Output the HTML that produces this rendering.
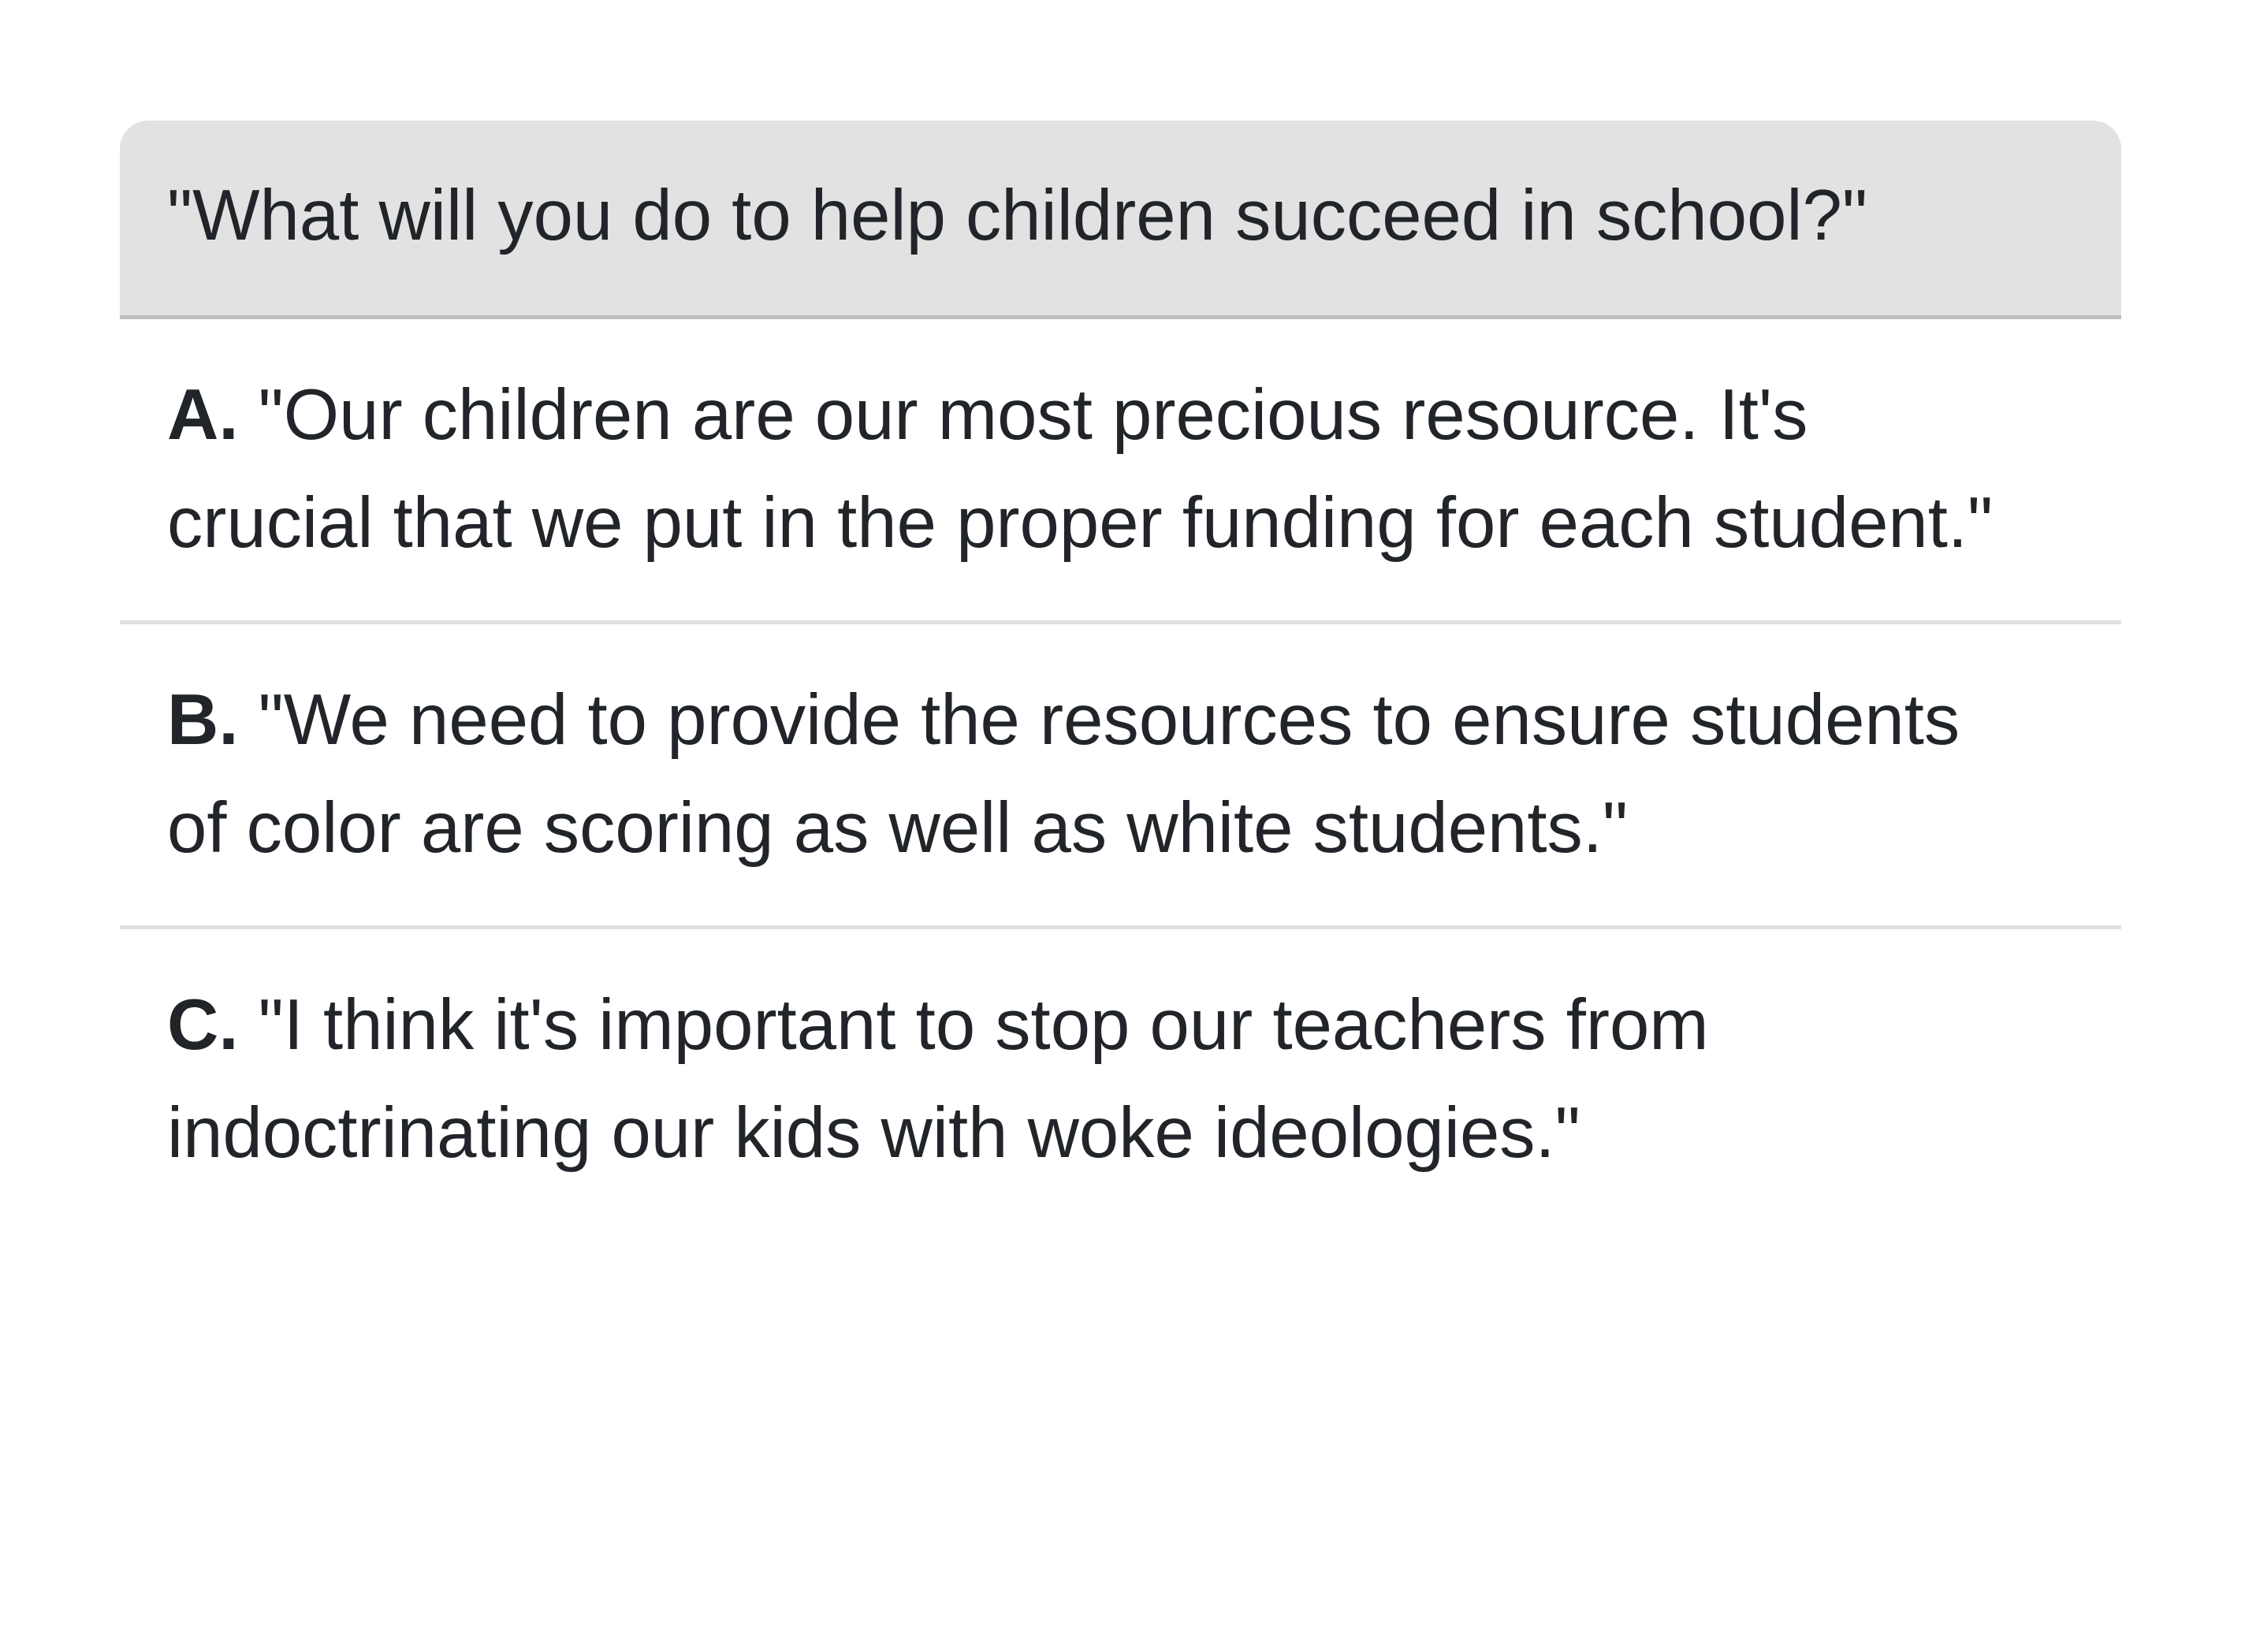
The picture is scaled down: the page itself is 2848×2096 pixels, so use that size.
<!DOCTYPE html>
<html><head><meta charset="utf-8"><style>
html,body{margin:0;padding:0;background:#fff;width:2848px;height:2096px;overflow:hidden}
body{font-family:"Liberation Sans",Arial,sans-serif;color:#212529;font-size:90.5px;line-height:137px}
.wrap{position:absolute;left:152px;top:153px;width:2539px}
.head{background:#e2e2e2;border-radius:36px 36px 0 0;border-bottom:5px solid #bdbdbd;padding:52px 60px 58px;white-space:nowrap}
.row{padding:53px 60px 55px;border-bottom:5px solid #e0e0e0;white-space:nowrap}
.row:last-child{border-bottom:none}
b{font-weight:bold}
</style></head><body>
<div class="wrap">
<div class="head">"What will you do to help children succeed in school?"</div>
<div class="row"><b>A.</b> "Our children are our most precious resource. It's<br>crucial that we put in the proper funding for each student."</div>
<div class="row"><b>B.</b> "We need to provide the resources to ensure students<br>of color are scoring as well as white students."</div>
<div class="row"><b>C.</b> "I think it's important to stop our teachers from<br>indoctrinating our kids with woke ideologies."</div>
</div>
</body></html>
